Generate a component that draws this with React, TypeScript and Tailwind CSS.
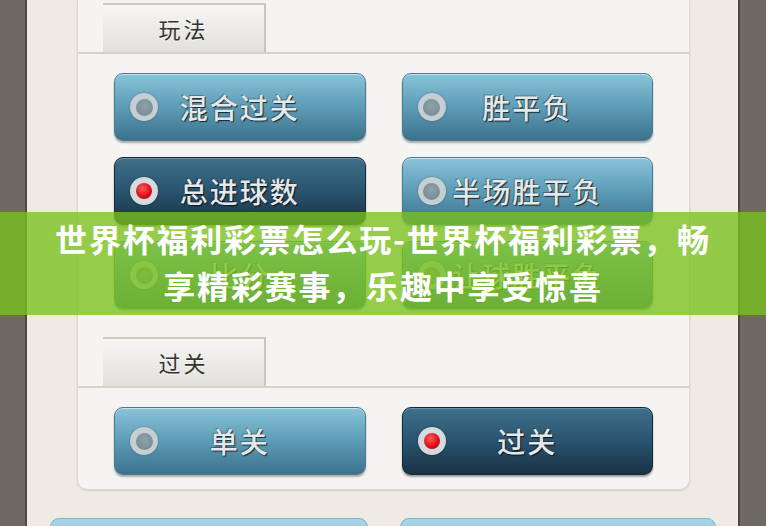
import React from "react";

const cjk = "font-['Noto_Sans_CJK_SC','Noto_Sans',sans-serif]";

function Radio({ selected }: { selected?: boolean }) {
  if (selected) {
    return (
      <div className="absolute left-[15px] top-1/2 -translate-y-1/2 w-[28px] h-[28px] rounded-full bg-[#d3dbde] shadow-[0_0_2px_rgba(0,0,0,0.5)] flex items-center justify-center">
        <div className="w-[16px] h-[16px] rounded-full bg-[radial-gradient(circle_at_40%_35%,#ff5a5a,#e0101a_55%,#a00008)]" />
      </div>
    );
  }
  return (
    <div className="absolute left-[15px] top-1/2 -translate-y-1/2 w-[28px] h-[28px] rounded-full bg-[#c5cfd3] shadow-[0_0_2px_rgba(0,0,0,0.35)] flex items-center justify-center">
      <div className="w-[17px] h-[17px] rounded-full bg-[radial-gradient(circle_at_50%_40%,#8fa2aa,#71858e)]" />
    </div>
  );
}

function Btn({ label, selected }: { label: string; selected?: boolean }) {
  return (
    <div
      className={
        selected
          ? "relative h-[68px] rounded-[9px] border border-[#142835] bg-gradient-to-b from-[#3f7089] via-[#2a5470] to-[#193244] shadow-[inset_0_1px_0_rgba(255,255,255,0.25),0_2px_2px_rgba(0,0,0,0.35)] flex items-center justify-center"
          : "relative h-[68px] rounded-[9px] border border-[#4a7a8f] bg-gradient-to-b from-[#88c3d8] via-[#5d9cb7] to-[#3c728c] shadow-[inset_0_1px_0_rgba(255,255,255,0.55),0_2px_2px_rgba(0,0,0,0.3)] flex items-center justify-center"
      }
    >
      <Radio selected={selected} />
      <span
        className={`${cjk} font-medium text-[28px] tracking-[2px] text-[#e4e8ea] [text-shadow:1px_1px_1px_rgba(0,0,0,0.75),-1px_-1px_0_rgba(0,0,0,0.3)]`}
      >
        {label}
      </span>
    </div>
  );
}

function Tab({ label }: { label: string }) {
  return (
    <div className="ml-[25px] w-[163px] h-[49px] border-t-2 border-[#cfcac2] border-r-2 border-r-[#c9c4bc] bg-gradient-to-b from-[#f7f6f4] to-[#e3e0db] flex items-center justify-center">
      <span className={`${cjk} text-[22px] tracking-[3px] text-[#333333] [text-shadow:0_1px_0_rgba(255,255,255,0.8)]`}>
        {label}
      </span>
    </div>
  );
}

export default function App() {
  return (
    <div className="relative w-[766px] h-[526px] overflow-hidden flex bg-[#eeebe4]">
      <div className="w-[27px] h-full bg-[#6f6964] border-r-2 border-[#4d4843]" />
      <div className="flex-1 flex flex-col">
        <div className="ml-[50px] w-[613px] bg-[#f5f4f2] border-x border-[#dcd8d0] border-b rounded-b-[10px] shadow-[0_1px_2px_rgba(0,0,0,0.12)] flex flex-col">
          <div className="pt-[3px] border-b-2 border-[#d6d1c9]">
            <Tab label="玩法" />
          </div>
          <div className="px-[36px] pt-[19px] grid grid-cols-2 gap-x-[36px] gap-y-[16px]">
            <Btn label="混合过关" />
            <Btn label="胜平负" />
            <Btn label="总进球数" selected />
            <Btn label="半场胜平负" />
            <Btn label="比分" />
            <Btn label="让球胜平负" />
          </div>
          <div className="pt-[28px] border-b-2 border-[#d6d1c9]">
            <Tab label="过关" />
          </div>
          <div className="px-[36px] pt-[19px] pb-[14px] grid grid-cols-2 gap-x-[36px]">
            <Btn label="单关" />
            <Btn label="过关" selected />
          </div>
        </div>
        <div className="mt-[28px] ml-[23px] flex gap-[32px]">
          <div className="w-[318px] h-[60px] rounded-[9px] border border-[#7fb0c4] bg-gradient-to-b from-[#a6d6e8] to-[#6aa6bf]" />
          <div className="w-[316px] h-[60px] rounded-[9px] border border-[#7fb0c4] bg-gradient-to-b from-[#a6d6e8] to-[#6aa6bf]" />
        </div>
      </div>
      <div className="w-[28px] h-full bg-[#6f6964] border-l-2 border-[#4d4843]" />

      <div className="absolute left-0 top-[212px] w-full h-[103px] bg-[rgba(122,194,28,0.78)] flex flex-col items-center justify-center pb-[4px]">
        <div className={`${cjk} font-bold text-[32px] leading-[47px] tracking-[1.8px] text-white whitespace-nowrap`}>
          世界杯福利彩票怎么玩-世界杯福利彩票，畅
        </div>
        <div className={`${cjk} font-bold text-[32px] leading-[47px] tracking-[1.8px] text-white whitespace-nowrap`}>
          享精彩赛事，乐趣中享受惊喜
        </div>
      </div>
    </div>
  );
}
